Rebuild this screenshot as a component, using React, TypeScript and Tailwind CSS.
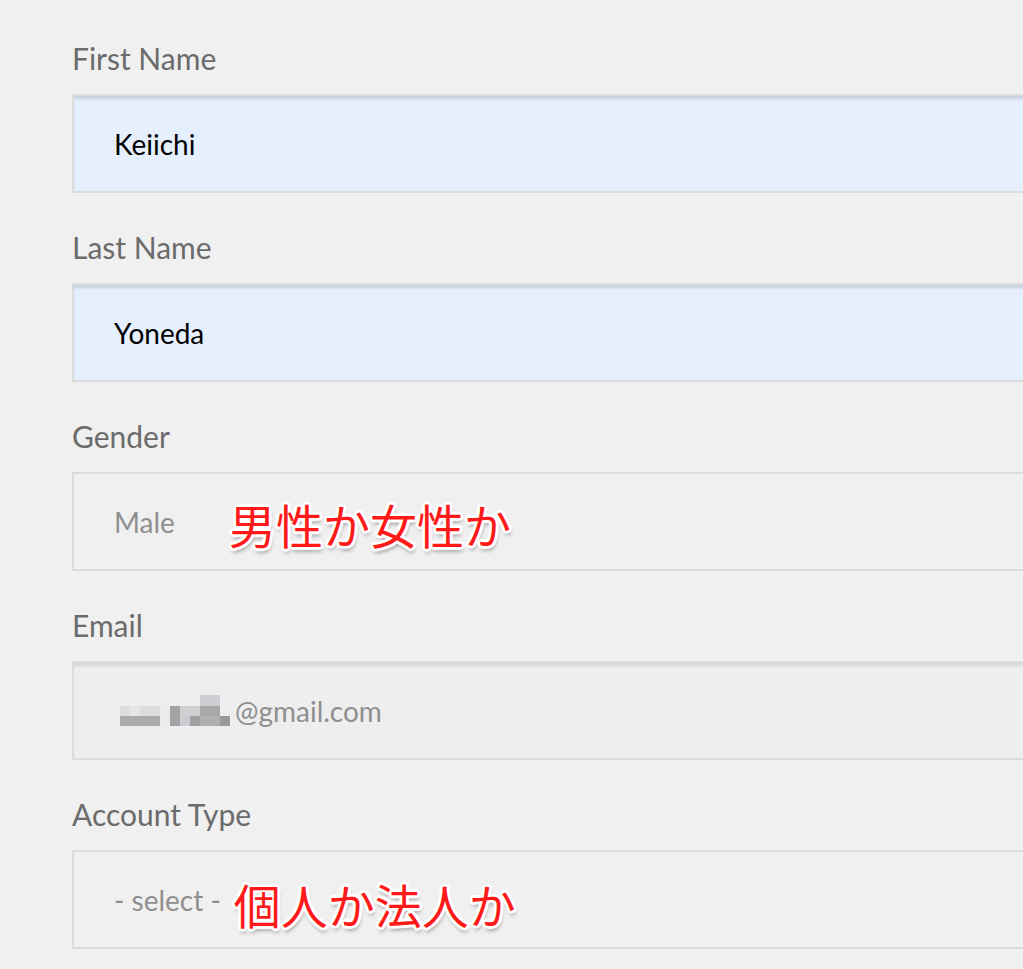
import React from "react";

const lato = "font-['Lato','Noto_Sans',sans-serif]";
const note =
  "font-['Noto_Sans_CJK_JP',sans-serif] text-[47px] leading-none text-[#ff1a1a] [text-shadow:2px_0_0_#fff,-2px_0_0_#fff,0_2px_0_#fff,0_-2px_0_#fff,2px_2px_0_#fff,-2px_-2px_0_#fff,2px_-2px_0_#fff,-2px_2px_0_#fff,3px_0_1px_#fff,-3px_0_1px_#fff,0_3px_1px_#fff,0_-3px_1px_#fff,1px_4px_4px_rgba(0,0,0,0.45)]";

function Label({ children }: { children: React.ReactNode }) {
  return (
    <div className={`${lato} h-[36px] text-[30px] leading-[36px] text-[#6b6b6b]`}>
      {children}
    </div>
  );
}

function Pixelated() {
  const blocks: [number, number, number, number, string][] = [
    [0, 12, 10, 20, "#eeeeee"],
    [10, 12, 40, 10, "#dedede"],
    [20, 12, 10, 10, "#e6e6e6"],
    [10, 22, 40, 10, "#ababab"],
    [50, 12, 10, 20, "#ececec"],
    [60, 12, 10, 20, "#a3a3a3"],
    [70, 12, 20, 10, "#d0d0d0"],
    [70, 22, 10, 10, "#c9ccd2"],
    [80, 22, 10, 10, "#a0a0a0"],
    [90, 1, 20, 11, "#cdced4"],
    [90, 12, 20, 10, "#a8a8a8"],
    [90, 22, 20, 10, "#b0b0b0"],
    [110, 22, 10, 10, "#9a9a9a"],
  ];
  return (
    <svg width="122" height="33" viewBox="0 0 122 33" className="shrink-0">
      {blocks.map(([x, y, w, h, c], i) => (
        <rect key={i} x={x} y={y} width={w} height={h} fill={c} />
      ))}
    </svg>
  );
}

function Box({
  children,
  variant,
}: {
  children: React.ReactNode;
  variant: "filled" | "plain" | "disabled";
}) {
  const cls =
    variant === "filled"
      ? "bg-[#e6effd] shadow-[inset_0_4px_3px_-1px_rgba(0,0,0,0.13)]"
      : variant === "disabled"
      ? "bg-[#eeeeee] shadow-[inset_0_4px_3px_-1px_rgba(0,0,0,0.1)]"
      : "bg-[#f0f0f0]";
  return (
    <div
      className={`mt-[18px] flex h-[99px] w-[calc(100%+40px)] items-center border-2 border-[#dcdcdc] pl-[40px] ${cls}`}
    >
      {children}
    </div>
  );
}

export default function App() {
  return (
    <div className="min-h-[969px] w-full overflow-hidden bg-[#f0f0f0] pl-[72px] pt-[40px]">
      <div className="flex flex-col gap-[36px]">
        <div>
          <Label>First Name</Label>
          <Box variant="filled">
            <span className={`${lato} text-[28px] text-black`}>Keiichi</span>
          </Box>
        </div>
        <div>
          <Label>Last Name</Label>
          <Box variant="filled">
            <span className={`${lato} text-[28px] text-black`}>Yoneda</span>
          </Box>
        </div>
        <div>
          <Label>Gender</Label>
          <Box variant="plain">
            <span className={`${lato} text-[28px] text-[#8f8f8f]`}>Male</span>
            <span className={`${note} ml-[54px] mt-[4px]`}>男性か女性か</span>
          </Box>
        </div>
        <div>
          <Label>Email</Label>
          <Box variant="disabled">
            <div className="-ml-[4px] flex items-center">
              <Pixelated />
              <span className={`${lato} ml-[3px] text-[28px] text-[#8f8f8f]`}>
                @gmail.com
              </span>
            </div>
          </Box>
        </div>
        <div>
          <Label>Account Type</Label>
          <Box variant="plain">
            <span className={`${lato} text-[28px] text-[#8f8f8f]`}>- select -</span>
            <span className={`${note} ml-[13px] mt-[8px]`}>個人か法人か</span>
          </Box>
        </div>
      </div>
    </div>
  );
}
